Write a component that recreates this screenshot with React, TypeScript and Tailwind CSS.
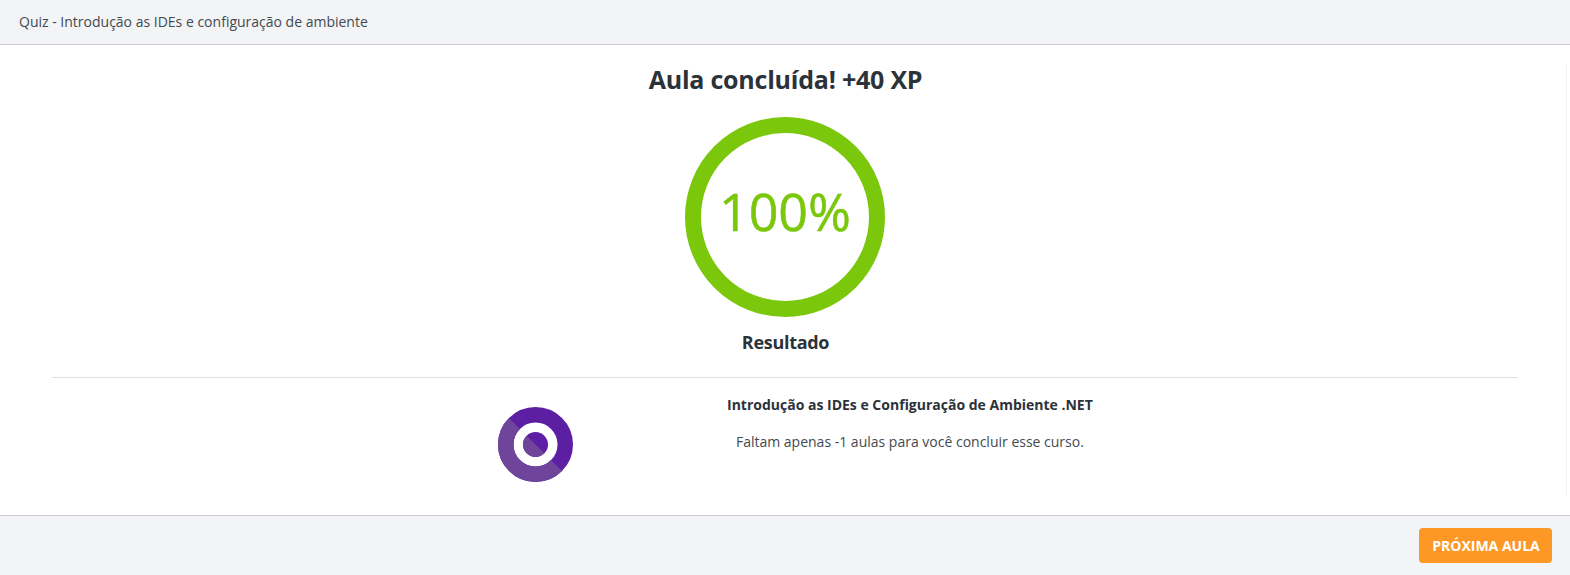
export default function App() {
  return (
    <div className="flex h-[575px] w-full flex-col bg-white font-['Open_Sans',sans-serif] text-[#2b323a]">
      <header className="flex h-[45px] shrink-0 items-center border-b border-[#c8cbd0] bg-[#f2f4f6] pl-[19px] text-sm font-normal text-[#434a52]">
        Quiz - Introdução as IDEs e configuração de ambiente
      </header>
      <main className="mt-5 mr-[3px] flex h-[430px] flex-col border-r border-[#f2f2f2] pl-[4px]">
        <h1 className="-mt-px h-[53px] pl-px text-center text-[25px] leading-[30px] font-bold tracking-[-0.22px]">Aula concluída! +40 XP</h1>
        <div className="flex justify-center">
          <svg width="200" height="200" viewBox="0 0 200 200">
            <circle cx="100" cy="100" r="92" fill="none" stroke="#7ac70c" strokeWidth="16" />
            <text x="100" y="114" textAnchor="middle" fontSize="52" fill="#7ac70c" stroke="#7ac70c" strokeWidth="0.5">100%</text>
          </svg>
        </div>
        <h2 className="mt-[11px] pl-px text-center text-lg leading-7 font-bold tracking-[-0.3px]">Resultado</h2>
        <hr className="mx-12 mt-[21px] border-[#dee0e2]" />
        <section className="flex">
          <svg className="mt-[29px] ml-[494px]" width="75" height="75" viewBox="0 0 75 75">
            <defs>
              <clipPath id="lowerLeft">
                <path d="M0 0L75 75H0Z" />
              </clipPath>
            </defs>
            <circle cx="37.5" cy="37.5" r="29.75" fill="none" stroke="#5c1fa3" strokeWidth="15.5" />
            <circle cx="37.5" cy="37.5" r="12.5" fill="#5c1fa3" />
            <g clipPath="url(#lowerLeft)">
              <circle cx="37.5" cy="37.5" r="29.75" fill="none" stroke="#6e459a" strokeWidth="15.5" />
              <circle cx="37.5" cy="37.5" r="12.5" fill="#6e459a" />
            </g>
          </svg>
          <div className="ml-[154px] pt-[17px] text-center text-sm">
            <h3 className="leading-5 font-bold">Introdução as IDEs e Configuração de Ambiente .NET</h3>
            <p className="mt-[17px] leading-5 font-normal text-[#434a52]">Faltam apenas -1 aulas para você concluir esse curso.</p>
          </div>
        </section>
      </main>
      <footer className="mt-5 flex h-[60px] items-center justify-end border-t border-[#c8cbd0] bg-[#f2f4f6] pr-[18px]">
        <button className="h-[35px] w-[133px] rounded bg-[#fd9827] pl-px text-sm font-bold text-white">PRÓXIMA AULA</button>
      </footer>
    </div>
  );
}
